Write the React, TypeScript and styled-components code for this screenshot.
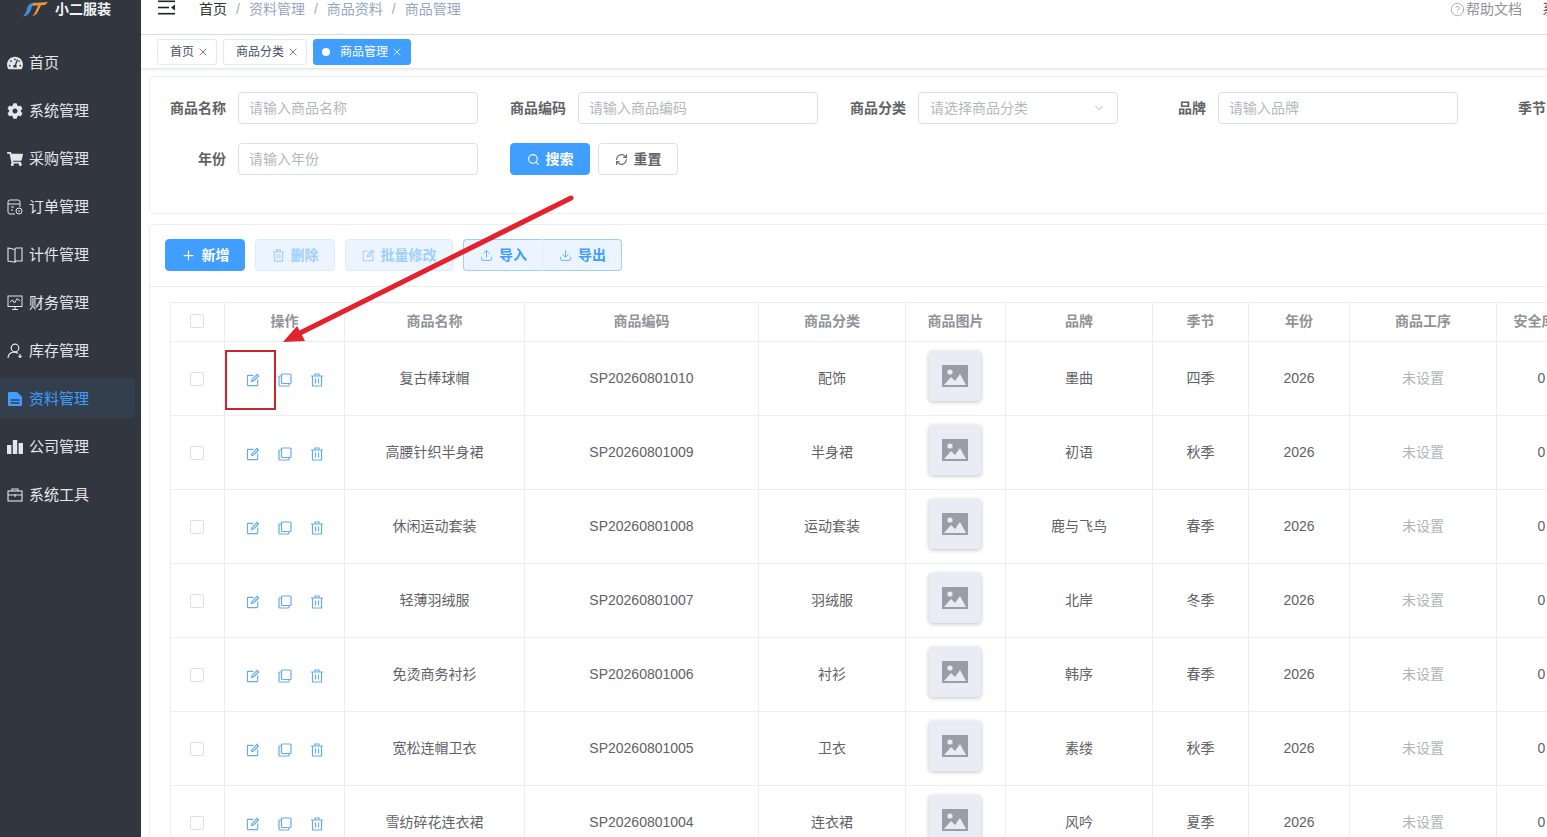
import React from 'react';
import styled, { createGlobalStyle } from 'styled-components';
import { FaTachometerAlt, FaCog, FaShoppingCart } from 'react-icons/fa';
import { Plus, Search, RefreshCw, Upload, Download, ChevronDown, X, CircleHelp } from 'lucide-react';

const FONT = '"Liberation Sans", "Noto Sans CJK SC", sans-serif';

const GlobalStyle = createGlobalStyle`
  html, body {
    margin: 0;
    height: 100%;
    overflow: hidden;
    background: #fff;
    font-family: ${FONT};
    line-height: 20px;
  }
`;

const Shell = styled.div`
  position: relative;
  display: flex;
  width: 1547px;
  height: 837px;
  overflow: hidden;
`;

const Sidebar = styled.aside`
  flex: 0 0 141px;
  background: #31363f;
  color: #e4e6e9;
`;

const Logo = styled.div`
  display: flex;
  align-items: center;
  height: 18px;
  padding-left: 22px;
  gap: 7px;
  font-size: 14px;
  font-weight: 700;
  color: #f2f3f5;
`;

const Menu = styled.nav`
  display: flex;
  flex-direction: column;
  padding-top: 24px;
`;

const MenuItem = styled.div<{ $active?: boolean }>`
  display: flex;
  align-items: center;
  gap: 6px;
  height: 40px;
  margin-bottom: 8px;
  width: 135px;
  padding: 2px 0 0 7px;
  box-sizing: border-box;
  border-radius: 0 4px 4px 0;
  font-size: 15px;
  color: ${(p) => (p.$active ? '#409eff' : '#e4e6e9')};
  background: ${(p) => (p.$active ? '#343f4e' : 'transparent')};
  svg { flex: 0 0 16px; }
`;

const Main = styled.main`
  flex: 1;
  min-width: 0;
  display: flex;
  flex-direction: column;
`;

const Header = styled.header`
  flex: 0 0 34px;
  display: flex;
  align-items: flex-start;
  padding: 0 0 0 17px;
  border-bottom: 1px solid #dcdfe6;
  font-size: 14px;
  line-height: 18px;
  overflow: hidden;
`;

const Crumbs = styled.div`
  display: flex;
  margin-left: 24px;
  color: #97a8be;
`;

const Crumb = styled.span<{ $current?: boolean }>`
  color: ${(p) => (p.$current ? '#303133' : '#97a8be')};
  &:not(:last-child)::after {
    content: '/';
    margin: 0 9px;
    color: #a8abb2;
  }
`;

const HeaderRight = styled.div`
  margin-left: auto;
  display: flex;
  align-items: center;
  height: 18px;
  gap: 1px;
  color: #909399;
  white-space: nowrap;
  flex: 0 0 97px;
  overflow: hidden;
  svg { flex: none; }
`;

const SettingsLabel = styled.span`
  margin-left: 19px;
  color: #606266;
`;

const TagsBar = styled.div`
  flex: 0 0 33px;
  display: flex;
  align-items: center;
  gap: 6px;
  padding-left: 16px;
  border-bottom: 1px solid #e4e7ed;
  box-shadow: 0 1px 3px rgba(0, 0, 0, 0.08);
`;

const Tag = styled.div<{ $active?: boolean }>`
  display: flex;
  align-items: center;
  height: 26px;
  box-sizing: border-box;
  padding: 0 7px 0 12px;
  gap: 3px;
  font-size: 12px;
  border-radius: 3px;
  border: 1px solid ${(p) => (p.$active ? '#409eff' : '#e4e7ed')};
  background: ${(p) => (p.$active ? '#409eff' : '#fff')};
  color: ${(p) => (p.$active ? '#fff' : '#495060')};
`;

const Dot = styled.span`
  width: 8px;
  height: 8px;
  border-radius: 50%;
  background: #fff;
  margin: 0 7px 0 -4px;
`;

const Content = styled.div`
  flex: 1;
  padding: 7px 0 0 8px;
  display: flex;
  flex-direction: column;
  gap: 10px;
  width: 1500px;
`;

const Card = styled.section`
  background: #fff;
  border: 1px solid #ebeef5;
  border-radius: 4px;
  flex: none;
`;

const SearchCard = styled(Card)`
  height: 138px;
  box-sizing: border-box;
  padding: 15px 0 0 20px;
`;

const FormRow = styled.div`
  display: flex;
  gap: 32px;
  height: 32px;
  margin-bottom: 19px;
`;

const Field = styled.label`
  display: flex;
  align-items: center;
  gap: 12px;
`;

const FieldLabel = styled.span`
  width: 56px;
  flex: none;
  text-align: right;
  font-size: 14px;
  font-weight: 700;
  color: #606266;
  white-space: nowrap;
`;

const InputBox = styled.div<{ $width: number }>`
  width: ${(p) => p.$width}px;
  height: 32px;
  box-sizing: border-box;
  padding: 0 11px 0 10px;
  display: flex;
  align-items: center;
  justify-content: space-between;
  border: 1px solid #dcdfe6;
  border-radius: 4px;
  font-size: 14px;
  color: #b4b7bd;
`;

const SelectBox = styled(InputBox)`
  padding-left: 11px;
  svg { color: #9a9da3; }
`;

const FormButtons = styled.div`
  display: flex;
  gap: 8px;
`;

const Button = styled.button<{ $kind?: 'primary' | 'plain' | 'disabled' | 'light'; $width: number }>`
  width: ${(p) => p.$width}px;
  height: 32px;
  display: inline-flex;
  align-items: center;
  justify-content: center;
  gap: 6px;
  padding: 0 0 2px;
  font-family: ${FONT};
  font-size: 14px;
  font-weight: 700;
  border-radius: 4px;
  border: 1px solid
    ${(p) =>
      p.$kind === 'primary' ? '#409eff' : p.$kind === 'disabled' ? '#d9ecff' : p.$kind === 'light' ? '#a0cfff' : '#dcdfe6'};
  background: ${(p) =>
    p.$kind === 'primary' ? '#409eff' : p.$kind === 'disabled' || p.$kind === 'light' ? '#ecf5ff' : '#fff'};
  color: ${(p) =>
    p.$kind === 'primary' ? '#fff' : p.$kind === 'disabled' ? '#a0cfff' : p.$kind === 'light' ? '#409eff' : '#606266'};
  svg { flex: none; margin-top: 2px; }
`;

const ListCard = styled(Card)`
  flex: 1;
`;

const Toolbar = styled.div`
  height: 62px;
  box-sizing: border-box;
  display: flex;
  align-items: center;
  gap: 10px;
  padding: 0 0 1px 15px;
  border-bottom: 1px solid #ebeef5;
`;

const ButtonGroup = styled.div`
  display: flex;
  button:first-child { border-radius: 4px 0 0 4px; border-right: none; }
  button:last-child { border-radius: 0 4px 4px 0; border-left: 1px solid #e3f0fd; }
`;

const TableWrap = styled.div`
  padding: 15px 0 0 20px;
`;

const Table = styled.table`
  border-collapse: collapse;
  table-layout: fixed;
  width: 1416px;
  font-size: 14px;
`;

const Th = styled.th`
  height: 39px;
  padding: 0 0 2px;
  box-sizing: border-box;
  border: 1px solid #ebeef5;
  font-size: 14px;
  font-weight: 700;
  color: #909399;
  white-space: nowrap;
  overflow: hidden;
`;

const Td = styled.td<{ $muted?: boolean }>`
  height: 74px;
  padding: 0 0 2px;
  box-sizing: border-box;
  border: 1px solid #ebeef5;
  text-align: center;
  color: ${(p) => (p.$muted ? '#b1b3b8' : '#606266')};
  white-space: nowrap;
  overflow: hidden;
`;

const Check = styled.span`
  display: block;
  width: 14px;
  height: 14px;
  margin: 0 0 0 19px;
  box-sizing: border-box;
  border: 1px solid #dcdfe6;
  border-radius: 2px;
  background: #fff;
`;

const RowCheck = styled(Check)`
  margin-top: 3px;
`;

const Actions = styled.div`
  display: flex;
  justify-content: center;
  align-items: center;
  gap: 18px;
  margin-top: 5px;
  color: #64abee;
`;

const Thumb = styled.div`
  width: 52px;
  height: 50px;
  margin: -4px 0 0 23px;
  display: flex;
  align-items: center;
  justify-content: center;
  background: #e9ecf4;
  border-radius: 4px;
  box-shadow: 0 1px 4px rgba(0, 0, 0, 0.25);
`;

const Annotation = styled.svg`
  position: absolute;
  left: 0;
  top: 0;
  pointer-events: none;
`;

const RedBox = styled.div`
  position: absolute;
  left: 225px;
  top: 350px;
  width: 51px;
  height: 60px;
  box-sizing: border-box;
  border: 2px solid #c9252d;
`;

const EditIcon = ({ size = 14 }: { size?: number }) => (
  <svg width={size} height={size} viewBox="-0.5 -0.5 15 15" fill="none" stroke="currentColor" strokeWidth="1.2">
    <path d="M7.5 2H1.6a.6.6 0 0 0-.6.6v9.8a.6.6 0 0 0 .6.6h9.8a.6.6 0 0 0 .6-.6V6.5" />
    <path d="M5.5 8.6l.5-2.2L11.3 1 13 2.7 7.7 8.1z" fill="currentColor" fillOpacity="0.25" />
  </svg>
);

const CopyIcon = () => (
  <svg width="14" height="14" viewBox="0 0 14 14" fill="none" stroke="currentColor" strokeWidth="1.2">
    <rect x="3.5" y="1" width="9.5" height="9.5" rx="1" />
    <path d="M3.2 3H2a1 1 0 0 0-1 1v8a1 1 0 0 0 1 1h8a1 1 0 0 0 1-1v-1" />
  </svg>
);

const TrashIcon = ({ size = 14 }: { size?: number }) => (
  <svg width={size} height={size} viewBox="0 0 14 14" fill="none" stroke="currentColor" strokeWidth="1.2">
    <path d="M1 3h12M5 3V1h4v2M2.5 3v10h9V3M5.5 5.5v5M8.5 5.5v5" />
  </svg>
);

const ImageIcon = () => (
  <svg width="26" height="22" viewBox="0 0 26 22">
    <rect width="26" height="22" fill="#9a9ca6" />
    <circle cx="8" cy="7" r="2.6" fill="#e9ecf4" />
    <path d="M2 20 9 12l4 4 5-7 6 11z" fill="#e9ecf4" />
  </svg>
);

const Hamburger = () => (
  <svg width="17" height="15" viewBox="0 0 17 15" fill="#1f2329">
    <rect y="0.5" width="17" height="1.6" />
    <rect y="6.7" width="11" height="1.6" />
    <rect y="12.9" width="17" height="1.6" />
    <path d="M17 4.5v6l-4-3z" />
  </svg>
);

const BrandMark = () => (
  <svg width="26" height="18" viewBox="0 0 26 18">
    <path d="M0 16.5C3 15.5 4 12 5 8.500S8 2.500 14 2.500C11 4 10 6 9 9.500S5 16.500 0 16.500z" fill="#3f8fd2" />
    <path d="M11.500 3 26 2l-3 3-4 .3-3 6.200C15 14 13 15.800 10.500 16c1.800-2 3-4.500 4-7l1.500-3.500-6 .2z" fill="#e8943a" />
  </svg>
);

const OrderIcon = () => (
  <svg width="16" height="16" viewBox="0 0 16 16" fill="none" stroke="currentColor" strokeWidth="1">
    <path d="M8 15H3a2 2 0 0 1-2-2V3a2 2 0 0 1 2-2h8a2 2 0 0 1 2 2v5" />
    <path d="M1 5h12M4 8h3M4 11h2" />
    <circle cx="12" cy="12" r="3" />
    <path d="M11 12h2" />
  </svg>
);

const BookIcon = () => (
  <svg width="16" height="16" viewBox="0 0 16 16" fill="none" stroke="currentColor" strokeWidth="1.1">
    <path d="M8 2.500 1 1v13l7 1.200zM8 2.500 9 1h6v13H9l-1 1.200" />
  </svg>
);

const FinanceIcon = () => (
  <svg width="16" height="16" viewBox="0 0 16 16" fill="none" stroke="currentColor" strokeWidth="1">
    <rect x="1" y="1" width="14" height="10.5" />
    <path d="M3 7l2.500-2 2 3L10 3.500l3 2.500M5 14.500h6M8 11.500v3" />
  </svg>
);

const StockIcon = () => (
  <svg width="16" height="16" viewBox="0 0 16 16" fill="none" stroke="currentColor" strokeWidth="1.2">
    <circle cx="8" cy="5" r="3.8" />
    <path d="M1 15c0-3.500 2.600-5.800 6-5.800 1.500 0 2.900.4 4 1.200M13 11v3.500M11.500 13l1.500 1.500 1.500-1.500" />
  </svg>
);

const DocIcon = () => (
  <svg width="16" height="16" viewBox="0 0 16 16">
    <path d="M1 2a1 1 0 0 1 1-1h8l5 5v8a1 1 0 0 1-1 1H2a1 1 0 0 1-1-1z" fill="#409eff" />
    <path d="M3.500 8.200h9v1.600h-9zM3.500 11.200h9v1.600h-9z" fill="#343f4e" />
  </svg>
);

const BarsIcon = () => (
  <svg width="16" height="16" viewBox="0 0 16 16" fill="currentColor">
    <rect y="6" width="4.4" height="9" />
    <rect x="5.8" y="1" width="4.4" height="14" />
    <rect x="11.6" y="4" width="4.4" height="11" />
  </svg>
);

const ToolboxIcon = () => (
  <svg width="16" height="16" viewBox="0 0 16 16" fill="none" stroke="currentColor" strokeWidth="1.1">
    <rect x="1" y="4" width="14" height="10" />
    <path d="M5 4V2h6v2M1 8h14M8 7v3" />
  </svg>
);

const menuItems: { label: string; icon: React.ReactNode; active?: boolean }[] = [
  { label: '首页', icon: <FaTachometerAlt size={16} /> },
  { label: '系统管理', icon: <FaCog size={16} /> },
  { label: '采购管理', icon: <FaShoppingCart size={16} /> },
  { label: '订单管理', icon: <OrderIcon /> },
  { label: '计件管理', icon: <BookIcon /> },
  { label: '财务管理', icon: <FinanceIcon /> },
  { label: '库存管理', icon: <StockIcon /> },
  { label: '资料管理', icon: <DocIcon />, active: true },
  { label: '公司管理', icon: <BarsIcon /> },
  { label: '系统工具', icon: <ToolboxIcon /> },
];

const columns: { title: string; width: number }[] = [
  { title: '', width: 54 },
  { title: '操作', width: 120 },
  { title: '商品名称', width: 180 },
  { title: '商品编码', width: 234 },
  { title: '商品分类', width: 147 },
  { title: '商品图片', width: 100 },
  { title: '品牌', width: 147 },
  { title: '季节', width: 96 },
  { title: '年份', width: 101 },
  { title: '商品工序', width: 147 },
  { title: '安全库存', width: 90 },
];

const rows = [
  ['复古棒球帽', 'SP20260801010', '配饰', '墨曲', '四季'],
  ['高腰针织半身裙', 'SP20260801009', '半身裙', '初语', '秋季'],
  ['休闲运动套装', 'SP20260801008', '运动套装', '鹿与飞鸟', '春季'],
  ['轻薄羽绒服', 'SP20260801007', '羽绒服', '北岸', '冬季'],
  ['免烫商务衬衫', 'SP20260801006', '衬衫', '韩序', '春季'],
  ['宽松连帽卫衣', 'SP20260801005', '卫衣', '素缕', '秋季'],
  ['雪纺碎花连衣裙', 'SP20260801004', '连衣裙', '风吟', '夏季'],
];

const App = () => (
  <Shell>
    <GlobalStyle />
    <Sidebar>
      <Logo>
        <BrandMark />
        小二服装
      </Logo>
      <Menu>
        {menuItems.map((item) => (
          <MenuItem key={item.label} $active={item.active}>
            {item.icon}
            {item.label}
          </MenuItem>
        ))}
      </Menu>
    </Sidebar>
    <Main>
      <Header>
        <Hamburger />
        <Crumbs>
          <Crumb $current>首页</Crumb>
          <Crumb>资料管理</Crumb>
          <Crumb>商品资料</Crumb>
          <Crumb>商品管理</Crumb>
        </Crumbs>
        <HeaderRight>
          <CircleHelp size={15} strokeWidth={1.2} />
          帮助文档
          <SettingsLabel>系统</SettingsLabel>
        </HeaderRight>
      </Header>
      <TagsBar>
        <Tag>首页<X size={12} strokeWidth={1.5} /></Tag>
        <Tag>商品分类<X size={12} strokeWidth={1.5} /></Tag>
        <Tag $active><Dot />商品管理<X size={12} strokeWidth={1.5} /></Tag>
      </TagsBar>
      <Content>
        <SearchCard>
          <FormRow>
            <Field><FieldLabel>商品名称</FieldLabel><InputBox $width={240}>请输入商品名称</InputBox></Field>
            <Field><FieldLabel>商品编码</FieldLabel><InputBox $width={240}>请输入商品编码</InputBox></Field>
            <Field>
              <FieldLabel>商品分类</FieldLabel>
              <SelectBox $width={200}>请选择商品分类<ChevronDown size={14} strokeWidth={1.2} /></SelectBox>
            </Field>
            <Field><FieldLabel>品牌</FieldLabel><InputBox $width={240}>请输入品牌</InputBox></Field>
            <Field><FieldLabel>季节</FieldLabel></Field>
          </FormRow>
          <FormRow>
            <Field><FieldLabel>年份</FieldLabel><InputBox $width={240}>请输入年份</InputBox></Field>
            <FormButtons>
              <Button $kind="primary" $width={80}><Search size={13} />搜索</Button>
              <Button $kind="plain" $width={80}><RefreshCw size={13} />重置</Button>
            </FormButtons>
          </FormRow>
        </SearchCard>
        <ListCard>
          <Toolbar>
            <Button $kind="primary" $width={80}><Plus size={15} />新增</Button>
            <Button $kind="disabled" $width={80}><TrashIcon size={13} />删除</Button>
            <Button $kind="disabled" $width={108}><EditIcon size={13} />批量修改</Button>
            <ButtonGroup>
              <Button $kind="light" $width={80}><Upload size={13} strokeWidth={1.4} />导入</Button>
              <Button $kind="light" $width={79}><Download size={13} strokeWidth={1.4} />导出</Button>
            </ButtonGroup>
          </Toolbar>
          <TableWrap>
            <Table>
              <colgroup>
                {columns.map((c) => (
                  <col key={c.width + c.title} width={c.width} />
                ))}
              </colgroup>
              <thead>
                <tr>
                  {columns.map((c) => (
                    <Th key={c.width + c.title}>{c.title || <Check />}</Th>
                  ))}
                </tr>
              </thead>
              <tbody>
                {rows.map(([name, code, category, brand, season]) => (
                  <tr key={code}>
                    <Td><RowCheck /></Td>
                    <Td>
                      <Actions>
                        <EditIcon />
                        <CopyIcon />
                        <TrashIcon />
                      </Actions>
                    </Td>
                    <Td>{name}</Td>
                    <Td>{code}</Td>
                    <Td>{category}</Td>
                    <Td><Thumb><ImageIcon /></Thumb></Td>
                    <Td>{brand}</Td>
                    <Td>{season}</Td>
                    <Td>2026</Td>
                    <Td $muted>未设置</Td>
                    <Td>0</Td>
                  </tr>
                ))}
              </tbody>
            </Table>
          </TableWrap>
        </ListCard>
      </Content>
    </Main>
    <Annotation width="1547" height="837" viewBox="0 0 1547 837">
      <path d="M571 198 296 335" stroke="#e4212c" strokeWidth="5" strokeLinecap="round" />
      <path d="M283 342 297 326 305 341z" fill="#e4212c" />
    </Annotation>
    <RedBox />
  </Shell>
);

export default App;
